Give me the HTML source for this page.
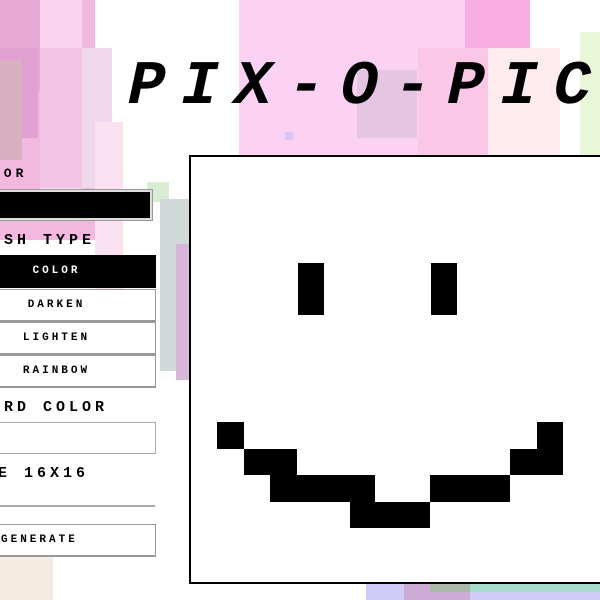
<!DOCTYPE html>
<html><head><style>
body{margin:0;width:600px;height:600px;overflow:hidden;background:#fff;position:relative;font-family:"Liberation Mono",monospace;}
div{position:absolute;box-sizing:border-box;}
.lbl{font-weight:bold;font-size:15px;letter-spacing:4px;color:#000;white-space:nowrap;}
.btn{left:-5px;width:161px;height:33px;border:1px solid #999;border-bottom:2px solid #999;background:#fff;font-weight:bold;font-size:11px;letter-spacing:3px;text-align:center;line-height:31px;padding-right:38px;}
.px{background:#000;}
</style></head><body>
<div style="left:0;top:0;width:95px;height:240px;background:#f2b8e0"></div>
<div style="left:40px;top:0;width:42px;height:190px;background:#f9d3f0"></div>
<div style="left:0;top:0;width:40px;height:92px;background:#e8a8d6"></div>
<div style="left:0;top:48px;width:38px;height:90px;background:#e0a0d0"></div>
<div style="left:0;top:60px;width:22px;height:100px;background:#d8b0c0"></div>
<div style="left:40px;top:48px;width:70px;height:140px;background:#f0c0e2;opacity:.8"></div>
<div style="left:82px;top:48px;width:30px;height:140px;background:#f0d8ea"></div>
<div style="left:95px;top:122px;width:28px;height:170px;background:#fbe2f2"></div>
<div style="left:239px;top:0;width:247px;height:155px;background:#fbd2f3"></div>
<div style="left:405px;top:0;width:82px;height:155px;background:#fbd2f3"></div>
<div style="left:465px;top:0;width:65px;height:53px;background:#f8aee0"></div>
<div style="left:357px;top:70px;width:60px;height:68px;background:#e4c6e2"></div>
<div style="left:418px;top:48px;width:70px;height:107px;background:#fac8e6"></div>
<div style="left:488px;top:48px;width:72px;height:107px;background:#fdebee"></div>
<div style="left:580px;top:32px;width:20px;height:123px;background:#eaf6d8"></div>
<div style="left:285px;top:132px;width:8px;height:8px;background:#d8c4f6"></div>
<div style="left:147px;top:182px;width:22px;height:20px;background:#d8edd4"></div>
<div style="left:160px;top:199px;width:30px;height:172px;background:#d0d8d8"></div>
<div style="left:176px;top:244px;width:14px;height:136px;background:#d8b8d8"></div>
<div style="left:0;top:545px;width:53px;height:55px;background:#f4ece0"></div>
<div style="left:366px;top:584px;width:40px;height:16px;background:#d0ccf6"></div>
<div style="left:404px;top:584px;width:66px;height:16px;background:#ceaad6"></div>
<div style="left:430px;top:584px;width:40px;height:8px;background:#aab8a8"></div>
<div style="left:470px;top:584px;width:130px;height:8px;background:#a8dccc"></div>
<div style="left:470px;top:592px;width:130px;height:8px;background:#d0ccf6"></div>
<div style="left:128px;top:55px;font-size:62px;font-weight:bold;letter-spacing:16px;line-height:64px;transform:skewX(-12deg);white-space:nowrap;color:#000">PIX-O-PIC</div>
<div class="lbl" style="left:-8px;top:166px;font-size:13px">LOR</div>
<div style="left:-5px;top:190px;width:157px;height:30px;background:#000;border:2px solid #ddd;outline:1px solid #999"></div>
<div class="lbl" style="left:-9px;top:232px">USH TYPE</div>
<div class="btn" style="top:255px;background:#000;color:#fff;border-color:#000">COLOR</div>
<div class="btn" style="top:289px">DARKEN</div>
<div class="btn" style="top:322px">LIGHTEN</div>
<div class="btn" style="top:355px">RAINBOW</div>
<div class="lbl" style="left:-9px;top:399px">ARD COLOR</div>
<div style="left:-5px;top:422px;width:161px;height:32px;border:1px solid #aaa;background:#fff"></div>
<div class="lbl" style="left:-2px;top:465px">E 16X16</div>
<div style="left:-5px;top:505px;width:160px;height:2px;background:#aaa"></div>
<div class="btn" style="top:524px;height:33px;text-align:left;padding-left:5px;padding-right:0">GENERATE</div>
<div style="left:189px;top:155px;width:420px;height:429px;border:2px solid #000;background:#fff"></div>
<div class="px" style="left:298px;top:263px;width:26px;height:52px"></div>
<div class="px" style="left:431px;top:263px;width:26px;height:52px"></div>
<div class="px" style="left:217px;top:422px;width:27px;height:27px"></div>
<div class="px" style="left:244px;top:449px;width:53px;height:26px"></div>
<div class="px" style="left:270px;top:475px;width:105px;height:27px"></div>
<div class="px" style="left:350px;top:502px;width:80px;height:26px"></div>
<div class="px" style="left:430px;top:475px;width:80px;height:27px"></div>
<div class="px" style="left:510px;top:449px;width:53px;height:26px"></div>
<div class="px" style="left:537px;top:422px;width:26px;height:27px"></div>
</body></html>
